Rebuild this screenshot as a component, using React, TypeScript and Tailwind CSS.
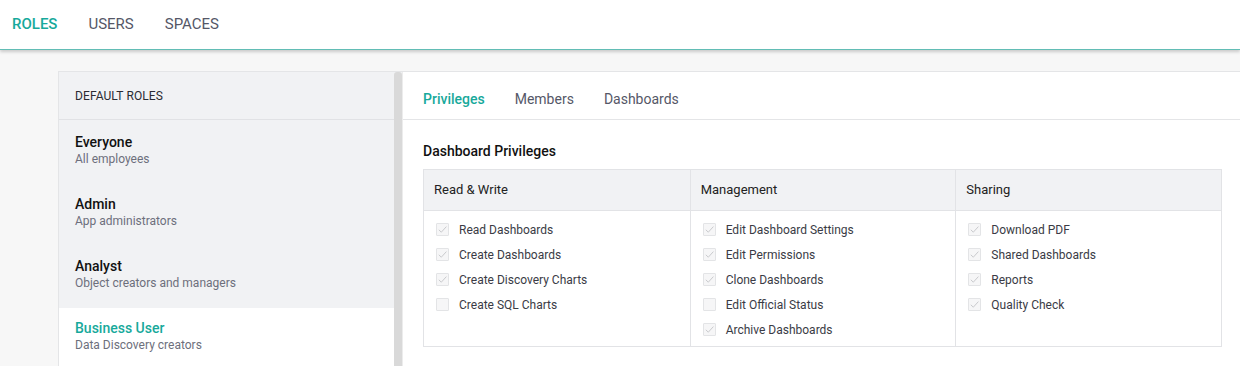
import React from "react";

const teal = "text-[#17a99b]";

function Check({ on }: { on: boolean }) {
  return (
    <span className="w-[13px] h-[13px] border border-[#e3e4e6] bg-[#f6f6f7] rounded-[1px] flex items-center justify-center shrink-0">
      {on && (
        <svg width="11" height="11" viewBox="0 0 11 11">
          <path d="M1.8 5.8 L4.3 8.2 L9.4 2.6" fill="none" stroke="#c9cacd" strokeWidth="1" />
        </svg>
      )}
    </span>
  );
}

const columns: { title: string; items: [string, boolean][] }[] = [
  {
    title: "Read & Write",
    items: [
      ["Read Dashboards", true],
      ["Create Dashboards", true],
      ["Create Discovery Charts", true],
      ["Create SQL Charts", false],
    ],
  },
  {
    title: "Management",
    items: [
      ["Edit Dashboard Settings", true],
      ["Edit Permissions", true],
      ["Clone Dashboards", true],
      ["Edit Official Status", false],
      ["Archive Dashboards", true],
    ],
  },
  {
    title: "Sharing",
    items: [
      ["Download PDF", true],
      ["Shared Dashboards", true],
      ["Reports", true],
      ["Quality Check", true],
    ],
  },
];

const roles = [
  { name: "Everyone", desc: "All employees" },
  { name: "Admin", desc: "App administrators" },
  { name: "Analyst", desc: "Object creators and managers" },
  { name: "Business User", desc: "Data Discovery creators", active: true },
];

export default function App() {
  return (
    <div
      className="w-[1240px] h-[366px] overflow-hidden bg-[#f7f7f7] flex flex-col"
      style={{ fontFamily: "Roboto, 'Noto Sans', sans-serif" }}
    >
      <header className="h-[50px] shrink-0 bg-white border-b border-[#62bdb5] shadow-[0_2px_3px_rgba(0,0,0,0.18)] flex items-center pl-[12px] gap-[31px] text-[15px] relative z-10">
        <span className={`${teal} font-medium`}>ROLES</span>
        <span className="text-[#555767]">USERS</span>
        <span className="text-[#555767]">SPACES</span>
      </header>
      <div className="flex pl-[58px] pt-[21px] flex-1">
        <aside className="w-[345px] shrink-0 flex border-l border-t border-[#e4e5e7] bg-[#f1f2f4]">
          <div className="flex-1 flex flex-col">
            <div className="h-[48px] border-b border-[#e1e2e5] flex items-center pl-[16px] text-[12px] text-[#2a2b33] tracking-[0.1px]">
              DEFAULT ROLES
            </div>
            <div className="h-[2px]" />
            {roles.map((r) => (
              <div
                key={r.name}
                className={`h-[62px] pl-[16px] pt-[11px] flex flex-col ${r.active ? "bg-white" : ""}`}
              >
                <span
                  className={`text-[14px] leading-[18px] font-medium ${r.active ? "text-[#17a99b]" : "text-[#111]"}`}
                >
                  {r.name}
                </span>
                <span className="text-[12px] leading-[16px] text-[#6d6f7c]">{r.desc}</span>
              </div>
            ))}
          </div>
          <div className="w-[8px] bg-[#d9d9d9] rounded-t-[3px]" />
          <div className="w-[1px] bg-[#ececec]" />
        </aside>
        <main className="flex-1 bg-white border-t border-[#e4e5e7] flex flex-col">
          <nav className="h-[48px] border-b border-[#e4e5e7] flex items-start pt-[17px] pl-[20px] gap-[30px] text-[14px] leading-[20px]">
            <span className={`${teal} font-medium`}>Privileges</span>
            <span className="text-[#555767]">Members</span>
            <span className="text-[#555767]">Dashboards</span>
          </nav>
          <div className="pl-[20px] pr-[18px]">
            <h2 className="mt-[21px] text-[14px] leading-[20px] font-medium text-[#111]">Dashboard Privileges</h2>
            <div className="mt-[8px] border border-[#e2e3e6] grid grid-cols-3">
              {columns.map((c, i) => (
                <div key={c.title} className={`flex flex-col ${i > 0 ? "border-l border-[#e2e3e6]" : ""}`}>
                  <div className="h-[41px] bg-[#f1f2f4] border-b border-[#e2e3e6] flex items-center pl-[10px] text-[13px] text-[#222]">
                    {c.title}
                  </div>
                  <div className="flex flex-col pt-[6px] pb-[4px]">
                    {c.items.map(([label, on]) => (
                      <div key={label} className="h-[25px] flex items-center pl-[12px] gap-[10px]">
                        <Check on={on} />
                        <span className="text-[12px] text-[#3a3b45]">{label}</span>
                      </div>
                    ))}
                  </div>
                </div>
              ))}
            </div>
          </div>
        </main>
      </div>
    </div>
  );
}
